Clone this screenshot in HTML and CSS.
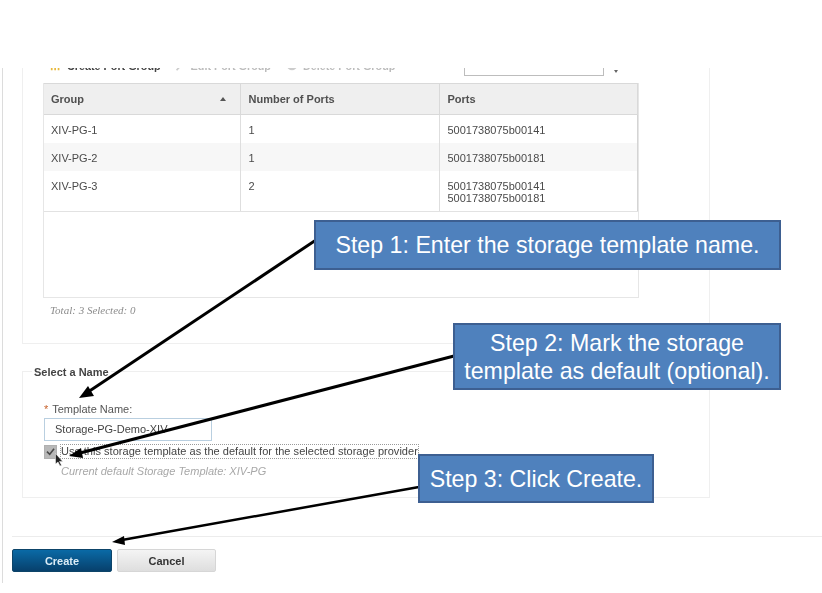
FILE: index.html
```html
<!DOCTYPE html>
<html lang="en">
<head>
<meta charset="utf-8">
<title>Create storage template</title>
<link rel="stylesheet" href="styles.css">
</head>
<body>
<div class="slide">
  <div class="screen">
    <div class="frame">
      <section class="panel panel-top">
        <div class="toolbar">
          <span class="tool tool-on"><svg class="tool-icon" viewBox="0 0 14 14"><path d="M2 3v9M6 3v9M10 3v9" stroke="#e8b93c" stroke-width="2"/></svg>Create Port Group</span>
          <span class="tool tool-off tool-edit"><svg class="tool-icon" viewBox="0 0 14 14"><path d="M3 12 11 3" stroke="#ccc" stroke-width="2"/></svg>Edit Port Group</span>
          <span class="tool tool-off tool-del"><svg class="tool-icon" viewBox="0 0 14 14"><circle cx="7" cy="6" r="6" fill="#ccc"/></svg>Delete Port Group</span>
          <span class="filter"></span>
          <span class="caret"></span>
        </div>
        <div class="table-box">
          <table class="ports">
            <thead>
              <tr>
                <th class="col-group"><span class="th-inner">Group<span class="sort"></span></span></th>
                <th class="col-num">Number of Ports</th>
                <th class="col-ports">Ports</th>
              </tr>
            </thead>
            <tbody>
              <tr><td>XIV-PG-1</td><td>1</td><td>5001738075b00141</td></tr>
              <tr class="alt"><td>XIV-PG-2</td><td>1</td><td>5001738075b00181</td></tr>
              <tr class="tall"><td>XIV-PG-3</td><td>2</td><td>5001738075b00141<br>5001738075b00181</td></tr>
            </tbody>
          </table>
        </div>
        <p class="total">Total: 3 Selected: 0</p>
      </section>

      <section class="panel panel-name">
        <h2 class="legend">Select a Name</h2>
        <label class="field-label"><span class="req">*</span> Template Name:</label>
        <div class="input">Storage-PG-Demo-XIV</div>
        <div class="check-row">
          <span class="checkbox"><svg viewBox="0 0 14 14"><path d="M2.500 6.500 6 10 11.500 3" fill="none" stroke="#4a4a4a" stroke-width="2"/></svg></span>
          <span class="check-label">Use this storage template as the default for the selected storage provider.</span>
        </div>
        <p class="hint">Current default Storage Template: XIV-PG</p>
      </section>

      <footer class="actions">
        <button class="btn btn-primary">Create</button>
        <button class="btn btn-plain">Cancel</button>
      </footer>
    </div>
  </div>

  <svg class="arrows" viewBox="0 0 822 593">
    <path class="shaft" d="M316 240 88 392"/>
    <path class="head" d="M79 398 88 386 94 396Z"/>
    <path class="shaft" d="M454 356 80 453"/>
    <path class="head" d="M69 456 81 448 83 458Z"/>
    <path class="shaft shaft-thin" d="M419 487 122 540"/>
    <path class="head" d="M112 542 124 536 125 545Z"/>
    <path class="cursor" d="M55.500 453.500v10.500l2.500-2 2 4 1.500-.8-2-3.800h3.200Z"/>
  </svg>

  <div class="callout callout-1">Step 1: Enter the storage template name.</div>
  <div class="callout callout-2">Step 2: Mark the storage template as default (optional).</div>
  <div class="callout callout-3">Step 3: Click Create.</div>
</div>
</body>
</html>
```
FILE: styles.css
```css
* { box-sizing: border-box; }
html, body { margin: 0; padding: 0; background: #fff; }
.slide {
  position: relative;
  width: 822px;
  height: 593px;
  overflow: hidden;
  background: #fff;
  font-family: "Liberation Sans", Arial, sans-serif;
}

/* screenshot area */
.screen {
  height: 583px;
  padding: 68px 0 0 2px;
  filter: blur(0.45px);
}
.frame {
  height: 515px;
  border-left: 1px solid #dcdcdc;
  overflow: hidden;
  padding-left: 19px;
}
.panel {
  width: 688px;
  border: 1px solid #efefef;
}
.panel-top {
  height: 276px;
  border-top: 0;
  padding: 0 0 0 20px;
}
.toolbar {
  display: flex;
  align-items: flex-start;
  height: 15px;
  color: #444;
  font-size: 10.800px;
  font-weight: bold;
}
.tool {
  display: inline-flex;
  align-items: center;
  gap: 5px;
  height: 14px;
  margin-top: -9px;
  white-space: nowrap;
}
.tool-icon { width: 12px; height: 12px; flex: none; }
.tool-on { padding-left: 7px; }
.tool-off { color: #bcbcbc; }
.tool-edit { margin-left: 13px; }
.tool-del { margin-left: 15px; }
.filter {
  flex: none;
  width: 140px;
  height: 8px;
  margin-left: 69px;
  border: 1px solid #bdbdbd;
  border-top: 0;
}
.caret {
  flex: none;
  width: 0;
  height: 0;
  margin: 2px 0 0 10px;
  border: 2.500px solid transparent;
  border-top: 3px solid #666;
  border-bottom: 0;
}
.table-box {
  width: 596px;
  height: 215px;
  border: 1px solid #e6e6e6;
  border-top: 0;
}
.ports {
  width: 100%;
  border-collapse: collapse;
  table-layout: fixed;
  font-size: 11px;
  color: #4a4a4a;
}
.ports th {
  height: 31px;
  padding: 0 7px 1px 8px;
  background: #efefef;
  border: 1px solid #d9d9d9;
  border-width: 1px 1px 1px 0;
  text-align: left;
  font-weight: bold;
  color: #505050;
}
.ports th:first-child { padding-left: 7px; }
.col-group { width: 196px; border-left: 1px solid #d9d9d9; }
.col-num { width: 199px; }
.th-inner { display: flex; align-items: center; justify-content: space-between; padding-right: 7px; }
.sort {
  width: 0;
  height: 0;
  border: 3.500px solid transparent;
  border-bottom: 4px solid #555;
  border-top: 0;
}
.ports td {
  height: 28px;
  padding: 2px 7px 0 8px;
  border-right: 1px solid #dedede;
  vertical-align: middle;
  line-height: 12.500px;
}
.ports td:first-child { padding-left: 7px; }
.ports td:last-child { border-right: 1px solid #d4d4d4; }
.ports .alt td { background: #f7f7f7; padding-top: 4px; }
.ports .tall td {
  height: 41px;
  vertical-align: top;
  padding-top: 9px;
  border-bottom: 1px solid #e2e2e2;
}
.total {
  margin: 6px 0 0 7px;
  font: italic 11px "Liberation Serif", "Times New Roman", serif;
  color: #8c8c8c;
}
.panel-name {
  height: 127px;
  margin-top: 27px;
  padding: 0 0 0 21px;
}
.legend {
  margin: -6px 0 0 -12px;
  width: max-content;
  padding: 0 2px 0 2px;
  background: #fff;
  font-size: 11px;
  line-height: 12px;
  font-weight: bold;
  color: #444;
}
.field-label {
  display: block;
  margin-top: 25px;
  font-size: 11px;
  line-height: 12px;
  color: #555;
}
.req { color: #c8622c; margin-right: 1px; }
.input {
  width: 168px;
  height: 23px;
  margin-top: 3px;
  padding-left: 10px;
  border: 1px solid #b9cfe0;
  font-size: 11px;
  line-height: 21px;
  color: #444;
}
.check-row {
  display: flex;
  align-items: center;
  gap: 3px;
  margin-top: 3px;
}
.checkbox {
  flex: none;
  width: 13px;
  height: 14px;
  background: #b8b8b8;
  border: 1px solid #b0b0b0;
  display: flex;
}
.checkbox svg { width: 100%; height: 100%; }
.check-label {
  height: 15px;
  width: 359px;
  border: 1px dotted #9a9a9a;
  font-size: 11px;
  letter-spacing: 0.03px;
  line-height: 13px;
  color: #444;
  white-space: nowrap;
}
.hint {
  margin: 6px 0 0 17px;
  font-size: 11px;
  line-height: 12px;
  font-style: italic;
  color: #a8a8a8;
}
.actions {
  display: flex;
  gap: 5px;
  width: 820px;
  height: 47px;
  margin: 38px 0 0 -10px;
  padding-top: 12px;
  border-top: 1px solid #ececec;
}
.btn {
  height: 23px;
  padding: 0;
  border-radius: 2px;
  font: bold 11px "Liberation Sans", Arial, sans-serif;
}
.btn-primary {
  width: 100px;
  border: 1px solid #0d4469;
  background: linear-gradient(#0a6aa6, #07406c);
  color: #dcecf6;
}
.btn-plain {
  width: 99px;
  border: 1px solid #d6d6d6;
  background: linear-gradient(#f4f4f4, #dedede);
  color: #333;
}

/* overlays from the slide */
.arrows {
  position: absolute;
  left: 0;
  top: 0;
  width: 822px;
  height: 593px;
}
.shaft { fill: none; stroke: #000; stroke-width: 3; }
.shaft-thin { stroke-width: 2.500; }
.head { fill: #000; }
.cursor { fill: #222; stroke: #fff; stroke-width: 0.500; }
.callout {
  position: absolute;
  display: flex;
  align-items: center;
  justify-content: center;
  text-align: center;
  background: #4f81bd;
  border: 2px solid #3d5f91;
  color: #fff;
  font-size: 23.200px;
  line-height: 28px;
}
.callout-1 { left: 314px; top: 220px; width: 467px; height: 50px; }
.callout-2 { left: 453px; top: 323px; width: 328px; height: 67px; }
.callout-3 { left: 418px; top: 454px; width: 236px; height: 49px; }
```
